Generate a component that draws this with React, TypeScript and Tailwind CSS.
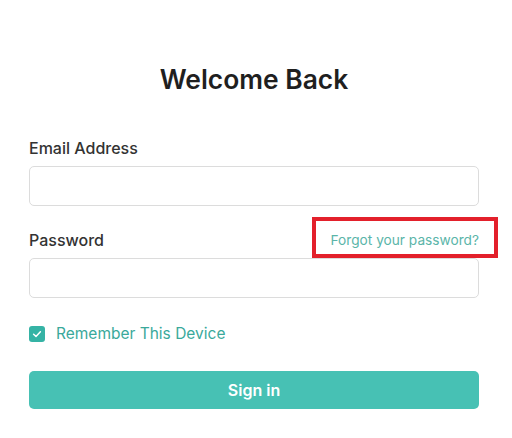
import React from "react";

export default function App() {
  return (
    <div className="min-h-[438px] w-[512px] bg-white font-['Inter',sans-serif]">
      <div className="ml-[29px] w-[450px] pt-[63px]">
        <h1 className="text-center text-[26.4px] leading-[32px] font-semibold text-[#1f1f1f]">
          Welcome Back
        </h1>
        <label className="mt-[41px] block text-[16px] leading-[24px] font-medium text-[#333333]">
          Email Address
        </label>
        <input
          type="email"
          className="mt-[6px] block h-[40px] w-full rounded-[5px] border border-[#dcdcdc] bg-white px-3 outline-none"
        />
        <div className="mt-[22px] flex h-[24px] items-center justify-between">
          <label className="text-[16px] leading-[24px] font-medium text-[#333333]">
            Password
          </label>
          <a className="relative text-[13.7px] leading-[20px] text-[#5ab5a9]">
            Forgot your password?
            <span className="pointer-events-none absolute left-[-19px] right-[-19px] top-[-13px] bottom-[-8px] border-[4px] border-[#e3202b]" />
          </a>
        </div>
        <input
          type="password"
          className="mt-[6px] block h-[40px] w-full rounded-[5px] border border-[#dcdcdc] bg-white px-3 outline-none"
        />
        <div className="mt-[24px] flex h-[24px] items-center gap-[11px]">
          <span className="flex h-[16px] w-[16px] items-center justify-center rounded-[3px] bg-[#35b3a5]">
            <svg width="10" height="10" viewBox="0 0 10 10" fill="none">
              <polyline points="1.6,5.2 4,7.4 8.4,2.8" stroke="white" strokeWidth="1.5" strokeLinecap="round" strokeLinejoin="round" />
            </svg>
          </span>
          <span className="text-[15.5px] leading-[24px] text-[#3aa99b]">Remember This Device</span>
        </div>
        <button className="mt-[25px] flex h-[38px] w-full items-center justify-center rounded-[5px] bg-[#47c1b4] text-[16px] font-semibold text-white">
          Sign in
        </button>
      </div>
    </div>
  );
}
